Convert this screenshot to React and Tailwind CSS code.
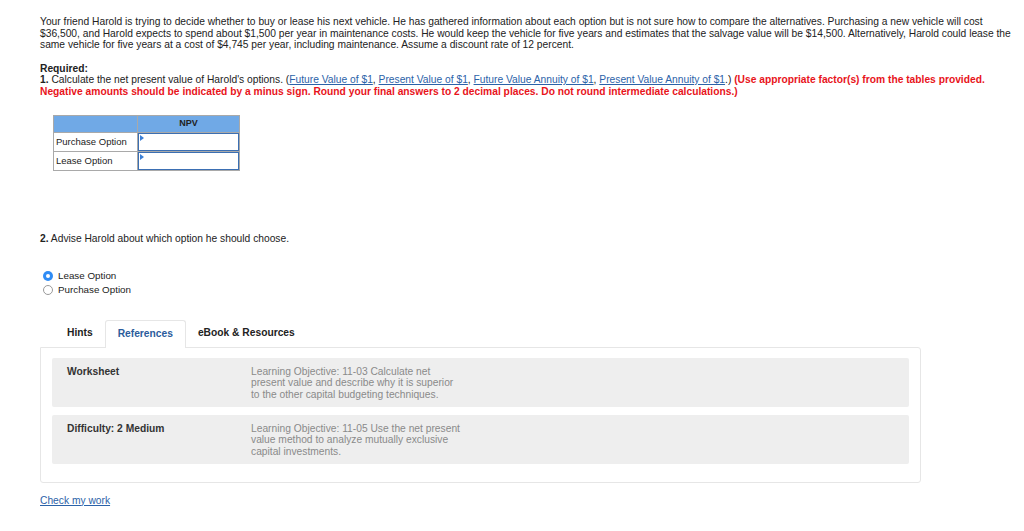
import React, { useState } from "react";

const Link = ({ children }) => (
  <a href="#" className="text-[#2b62a8] underline decoration-[#2b62a8] underline-offset-1">
    {children}
  </a>
);

function Radio({ checked, label, onClick }) {
  return (
    <label className="flex items-center h-[14px] cursor-pointer text-[9.8px]" onClick={onClick}>
      {checked ? (
        <span className="w-[10px] h-[10px] rounded-full bg-[#2f8cf5] flex items-center justify-center">
          <span className="w-[4px] h-[4px] rounded-full bg-white"></span>
        </span>
      ) : (
        <span className="w-[10px] h-[10px] rounded-full border border-[#9a9a9a] bg-white"></span>
      )}
      <span className="ml-[5px]">{label}</span>
    </label>
  );
}

export default function App() {
  const [choice, setChoice] = useState("lease");
  const [tab, setTab] = useState("References");

  return (
    <div
      className="w-[1024px] h-[531px] bg-white text-[10.25px] leading-[11.5px] text-[#222] pl-[40px] pt-[16px] overflow-hidden"
      style={{ fontFamily: '"Liberation Sans", Arial, sans-serif' }}
    >
      <p className="whitespace-nowrap">
        Your friend Harold is trying to decide whether to buy or lease his next vehicle. He has gathered information about each option but is not sure how to compare the alternatives. Purchasing a new vehicle will cost
        <br />
        $36,500, and Harold expects to spend about $1,500 per year in maintenance costs. He would keep the vehicle for five years and estimates that the salvage value will be $14,500. Alternatively, Harold could lease the
        <br />
        same vehicle for five years at a cost of $4,745 per year, including maintenance. Assume a discount rate of 12 percent.
      </p>

      <div className="mt-[12px] whitespace-nowrap">
        <p className="font-bold">Required:</p>
        <p>
          <b>1.</b> Calculate the net present value of Harold's options. (<Link>Future Value of $1</Link>,{" "}
          <Link>Present Value of $1</Link>, <Link>Future Value Annuity of $1</Link>,{" "}
          <Link>Present Value Annuity of $1</Link>.){" "}
          <span className="text-[#e8141b] font-bold">(Use appropriate factor(s) from the tables provided.</span>
        </p>
        <p className="text-[#e8141b] font-bold">
          Negative amounts should be indicated by a minus sign. Round your final answers to 2 decimal places. Do not round intermediate calculations.)
        </p>
      </div>

      <table className="mt-[18px] ml-[13px] border-collapse text-[9.5px]">
        <thead>
          <tr className="h-[17px] bg-[#70a9e6]">
            <th className="w-[84px] border border-[#a9a9a9]"></th>
            <th className="w-[102px] border border-[#a9a9a9] font-bold text-[#222] text-[9px]">NPV</th>
          </tr>
        </thead>
        <tbody>
          {["Purchase Option", "Lease Option"].map((r) => (
            <tr key={r} className="h-[19px]">
              <td className="border border-[#a9a9a9] pl-[2px]">{r}</td>
              <td className="border border-[#a9a9a9] p-0 relative">
                <input className="w-full h-[18px] border-[1.5px] border-[#3b6fb3] outline-none bg-white" />
                <span className="absolute left-[2px] top-[2px] w-0 h-0 border-t-[3px] border-b-[3px] border-l-[4px] border-t-transparent border-b-transparent border-l-[#3b7fd6]"></span>
              </td>
            </tr>
          ))}
        </tbody>
      </table>

      <p className="mt-[62px]">
        <b>2.</b> Advise Harold about which option he should choose.
      </p>

      <div className="mt-[24px] ml-[3px]">
        <Radio checked={choice === "lease"} label="Lease Option" onClick={() => setChoice("lease")} />
        <Radio checked={choice === "purchase"} label="Purchase Option" onClick={() => setChoice("purchase")} />
      </div>

      <div className="mt-[23px] w-[881px]">
        <div className="flex items-end h-[27px] pl-[15px]">
          {["Hints", "References", "eBook & Resources"].map((t) => (
            <button
              key={t}
              onClick={() => setTab(t)}
              className={`flex items-center px-[12px] font-bold rounded-t-[3px] ${
                tab === t
                  ? "h-[28px] pb-px -mb-px relative z-10 bg-white text-[#2b5c9c] border border-b-0 border-[#e6e6e6]"
                  : "h-[27px] text-[#222]"
              }`}
            >
              {t}
            </button>
          ))}
        </div>
        <div className="border border-[#e6e6e6] rounded-b-[3px] rounded-tr-[3px] px-[11px] pt-[10px] pb-[18px] flex flex-col gap-[8px]">
          <div className="bg-[#eeeeee] rounded-[2px] h-[49px] flex pt-[8px] pl-[15px]">
            <span className="w-[184px] font-bold text-[#333]">Worksheet</span>
            <span className="text-[#8a8a8a] whitespace-nowrap">
              Learning Objective: 11-03 Calculate net
              <br />
              present value and describe why it is superior
              <br />
              to the other capital budgeting techniques.
            </span>
          </div>
          <div className="bg-[#eeeeee] rounded-[2px] h-[49px] flex pt-[8px] pl-[15px]">
            <span className="w-[184px] font-bold text-[#333]">Difficulty: 2 Medium</span>
            <span className="text-[#8a8a8a] whitespace-nowrap">
              Learning Objective: 11-05 Use the net present
              <br />
              value method to analyze mutually exclusive
              <br />
              capital investments.
            </span>
          </div>
        </div>
      </div>

      <div className="mt-[12px]">
        <Link>Check my work</Link>
      </div>
    </div>
  );
}
